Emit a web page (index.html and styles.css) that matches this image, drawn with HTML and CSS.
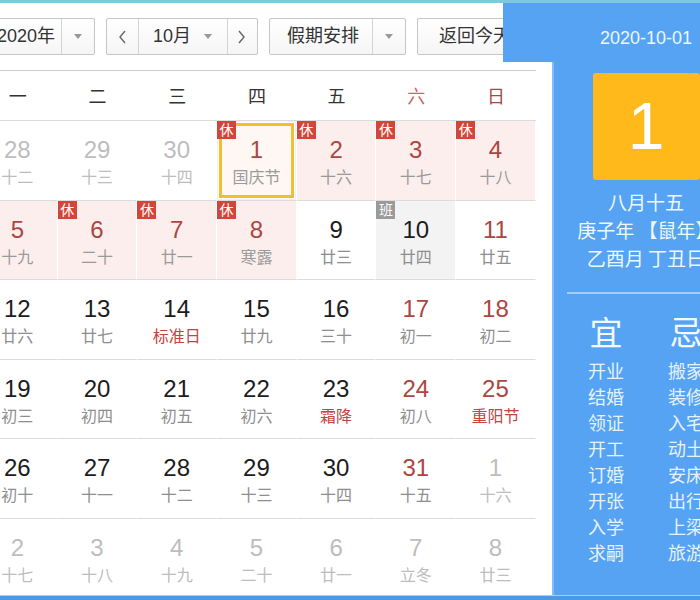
FILE: index.html
```html
<!DOCTYPE html>
<html lang="zh-CN">
<head>
<meta charset="utf-8">
<title>万年历</title>
<link rel="stylesheet" href="styles.css">
</head>
<body>
<div class="frame">
  <div class="main">
    <div class="cal">
      <div class="toolbar">
        <div class="box year">
          <div class="seg y-text">2020年</div>
          <div class="seg arrow-seg"><span class="caret"></span></div>
        </div>
        <div class="box month">
          <div class="seg nav"><svg width="9" height="14" viewBox="0 0 9 14"><path d="M7 1 L2 7 L7 13" fill="none" stroke="#666" stroke-width="1.4"/></svg></div>
          <div class="seg m-text"><span>10月</span><span class="caret"></span></div>
          <div class="seg nav next"><svg width="9" height="14" viewBox="0 0 9 14"><path d="M2 1 L7 7 L2 13" fill="none" stroke="#666" stroke-width="1.4"/></svg></div>
        </div>
        <div class="box holiday">
          <div class="seg h-text">假期安排</div>
          <div class="seg arrow-seg"><span class="caret"></span></div>
        </div>
        <div class="box today">
          <div class="seg t-text">返回今天</div>
        </div>
      </div>
      <div class="weekhead">
        <div>一</div><div>二</div><div>三</div><div>四</div><div>五</div><div class="sat">六</div><div class="sun">日</div>
      </div>
      <div class="grid">
        <div class="cell other"><span class="num">28</span><span class="lu">十二</span></div>
        <div class="cell other"><span class="num">29</span><span class="lu">十三</span></div>
        <div class="cell other"><span class="num">30</span><span class="lu">十四</span></div>
        <div class="cell hol sel"><span class="tag">休</span><span class="num">1</span><span class="lu fest2">国庆节</span></div>
        <div class="cell hol"><span class="tag">休</span><span class="num">2</span><span class="lu">十六</span></div>
        <div class="cell hol"><span class="tag">休</span><span class="num">3</span><span class="lu">十七</span></div>
        <div class="cell hol"><span class="tag">休</span><span class="num">4</span><span class="lu">十八</span></div>

        <div class="cell hol"><span class="tag">休</span><span class="num">5</span><span class="lu">十九</span></div>
        <div class="cell hol"><span class="tag">休</span><span class="num">6</span><span class="lu">二十</span></div>
        <div class="cell hol"><span class="tag">休</span><span class="num">7</span><span class="lu">廿一</span></div>
        <div class="cell hol"><span class="tag">休</span><span class="num">8</span><span class="lu fest">寒露</span></div>
        <div class="cell"><span class="num">9</span><span class="lu">廿三</span></div>
        <div class="cell work"><span class="tag ban">班</span><span class="num">10</span><span class="lu">廿四</span></div>
        <div class="cell we"><span class="num">11</span><span class="lu">廿五</span></div>

        <div class="cell"><span class="num">12</span><span class="lu">廿六</span></div>
        <div class="cell"><span class="num">13</span><span class="lu">廿七</span></div>
        <div class="cell"><span class="num">14</span><span class="lu fest">标准日</span></div>
        <div class="cell"><span class="num">15</span><span class="lu">廿九</span></div>
        <div class="cell"><span class="num">16</span><span class="lu">三十</span></div>
        <div class="cell we"><span class="num">17</span><span class="lu">初一</span></div>
        <div class="cell we"><span class="num">18</span><span class="lu">初二</span></div>

        <div class="cell"><span class="num">19</span><span class="lu">初三</span></div>
        <div class="cell"><span class="num">20</span><span class="lu">初四</span></div>
        <div class="cell"><span class="num">21</span><span class="lu">初五</span></div>
        <div class="cell"><span class="num">22</span><span class="lu">初六</span></div>
        <div class="cell"><span class="num">23</span><span class="lu fest">霜降</span></div>
        <div class="cell we"><span class="num">24</span><span class="lu">初八</span></div>
        <div class="cell we"><span class="num">25</span><span class="lu fest">重阳节</span></div>

        <div class="cell"><span class="num">26</span><span class="lu">初十</span></div>
        <div class="cell"><span class="num">27</span><span class="lu">十一</span></div>
        <div class="cell"><span class="num">28</span><span class="lu">十二</span></div>
        <div class="cell"><span class="num">29</span><span class="lu">十三</span></div>
        <div class="cell"><span class="num">30</span><span class="lu">十四</span></div>
        <div class="cell we"><span class="num">31</span><span class="lu">十五</span></div>
        <div class="cell other"><span class="num">1</span><span class="lu">十六</span></div>

        <div class="cell other"><span class="num">2</span><span class="lu">十七</span></div>
        <div class="cell other"><span class="num">3</span><span class="lu">十八</span></div>
        <div class="cell other"><span class="num">4</span><span class="lu">十九</span></div>
        <div class="cell other"><span class="num">5</span><span class="lu">二十</span></div>
        <div class="cell other"><span class="num">6</span><span class="lu">廿一</span></div>
        <div class="cell other"><span class="num">7</span><span class="lu">立冬</span></div>
        <div class="cell other"><span class="num">8</span><span class="lu">廿三</span></div>
      </div>
    </div>
    <div class="panel">
      <div class="p-head">2020-10-01</div>
      <div class="p-body">
        <div class="bigday">1</div>
        <div class="lunar">
          <div>八月十五</div>
          <div>庚子年 【鼠年】</div>
          <div>乙酉月 丁丑日</div>
        </div>
        <div class="divider"></div>
        <div class="yiji">
          <div class="col">
            <div class="yj-title">宜</div>
            <div class="item">开业</div>
            <div class="item">结婚</div>
            <div class="item">领证</div>
            <div class="item">开工</div>
            <div class="item">订婚</div>
            <div class="item">开张</div>
            <div class="item">入学</div>
            <div class="item">求嗣</div>
          </div>
          <div class="col">
            <div class="yj-title">忌</div>
            <div class="item">搬家</div>
            <div class="item">装修</div>
            <div class="item">入宅</div>
            <div class="item">动土</div>
            <div class="item">安床</div>
            <div class="item">出行</div>
            <div class="item">上梁</div>
            <div class="item">旅游</div>
          </div>
        </div>
      </div>
    </div>
  </div>
  <div class="bottom"></div>
</div>
</body>
</html>
```

FILE: styles.css
```css
* { box-sizing: border-box; }
html, body { margin: 0; padding: 0; background: #fff; }
body {
  font-family: "Liberation Sans", "Noto Sans CJK SC", sans-serif;
  color: #222;
}
.frame {
  width: 700px;
  height: 600px;
  overflow: hidden;
  border-top: 3px solid #7cc8dc;
  display: flex;
  flex-direction: column;
  background: #fff;
}
.main {
  flex: 1;
  min-height: 0;
  display: flex;
}
.cal {
  flex: none;
  width: 574px;
  margin-left: -22px;
  overflow: hidden;
}

/* toolbar */
.toolbar {
  width: 558px;
  height: 68px;
  border-bottom: 1px solid #cdcdcd;
  padding-top: 15px;
  display: flex;
  align-items: flex-start;
  gap: 11px;
}
.box {
  flex: none;
  height: 37px;
  border: 1px solid #c6c6c6;
  border-radius: 2px;
  background: linear-gradient(#ffffff, #f5f5f5);
  display: flex;
  font-size: 18px;
  color: #333;
  line-height: 35px;
  white-space: nowrap;
}
.seg {
  display: flex;
  align-items: center;
  justify-content: center;
  flex: none;
}
.seg + .seg { border-left: 1px solid #d4d4d4; }
.year { width: 117px; }
.y-text { width: 82px; justify-content: flex-end; padding-right: 6px; }
.arrow-seg { width: 32px; }
.caret {
  display: inline-block;
  width: 0;
  height: 0;
  border-left: 4px solid transparent;
  border-right: 4px solid transparent;
  border-top: 5px solid #999;
}
.month { width: 152px; }
.nav { width: 31px; }
.nav.next { width: 28px; }
.m-text { width: 89px; justify-content: flex-start; padding-left: 14px; gap: 13px; }
.holiday { width: 137px; }
.h-text { width: 102px; padding-left: 4px; }
.today { width: 130px; }
.t-text { padding-left: 21px; justify-content: flex-start; }

/* week header */
.weekhead {
  width: 558px;
  height: 50px;
  border-bottom: 1px solid #dcdcdc;
  display: grid;
  grid-template-columns: repeat(7, 79.7px);
  padding-top: 4px;
  font-size: 18px;
  line-height: 45px;
  color: #333;
  text-align: center;
}
.weekhead .sat { color: #c26a6a; }
.weekhead .sun { color: #a54848; }

/* grid */
.grid {
  width: 558px;
  display: grid;
  grid-template-columns: repeat(7, 79.7px);
  grid-auto-rows: 79.6px;
}
.cell {
  position: relative;
  border-bottom: 1px solid #dcdcdc;
  border-right: 1px solid #fff;
  display: flex;
  flex-direction: column;
  align-items: center;
  padding-top: 16px;
  background: #fff;
}
.num {
  font-size: 24px;
  line-height: 26px;
  color: #1c1c1c;
}
.lu {
  margin-top: 5px;
  font-size: 16px;
  line-height: 20px;
  color: #8e8e8e;
}
.cell.other .num, .cell.other .lu { color: #bdbdbd; }
.cell.hol { background: #fdeeee; }
.cell.hol .num, .cell.we .num { color: #ad4540; }
.cell.hol .lu { color: #9a9a9a; }
.cell.work { background: #f3f3f3; }
.lu.fest { color: #c4433c; }
.lu.fest2 { color: #a45e58; }
.cell.sel {
  background: #fff7f3;
  box-shadow: inset 0 0 0 1px #fdeeee, inset 0 0 0 2px #ffffff, inset 0 0 0 5px #f0c030;
}
.tag {
  position: absolute;
  left: 0;
  top: 0;
  width: 19px;
  height: 18px;
  background: #d2463a;
  color: #fff;
  font-size: 14px;
  line-height: 18px;
  text-align: center;
}
.tag.ban { background: #9a9a9a; }

/* right panel */
.panel {
  flex: none;
  width: 188px;
  background: #57a3f3;
  box-shadow: inset 2px 0 0 #84bdf6;
  color: #eef8ff;
  display: flex;
  flex-direction: column;
}
.p-head {
  position: relative;
  z-index: 1;
  margin-left: -49px;
  height: 59px;
  padding-top: 25px;
  background: #57a3f3;
  text-align: center;
  text-indent: 49px;
  font-size: 18px;
  line-height: 20px;
  color: #eaf7ff;
}
.p-body {
  display: flex;
  flex-direction: column;
  align-items: center;
}
.bigday {
  margin-top: 11px;
  width: 107px;
  height: 107px;
  border-radius: 3px;
  background: #ffb91a;
  color: #fff;
  font-size: 66px;
  line-height: 107px;
  text-align: center;
}
.lunar {
  margin-top: 8px;
  font-size: 19px;
  line-height: 28px;
  text-align: center;
  white-space: nowrap;
  font-family: "Noto Sans CJK SC", sans-serif;
}
.divider {
  margin-top: 20px;
  width: 158px;
  height: 2px;
  background: #a3cef8;
}
.yiji {
  margin-top: 17px;
  display: flex;
  font-family: "Noto Sans CJK SC", sans-serif;
}
.col {
  width: 80px;
  display: flex;
  flex-direction: column;
  align-items: center;
}
.yj-title {
  font-size: 33px;
  line-height: 40px;
  color: #f2f9ff;
}
.col .yj-title + .item { margin-top: 6px; }
.item {
  font-size: 18px;
  line-height: 26px;
  color: #e4f2ff;
}
.bottom {
  flex: none;
  height: 5px;
  border-top: 1px solid #a5cdf3;
  background: #4c98e8;
}
```
